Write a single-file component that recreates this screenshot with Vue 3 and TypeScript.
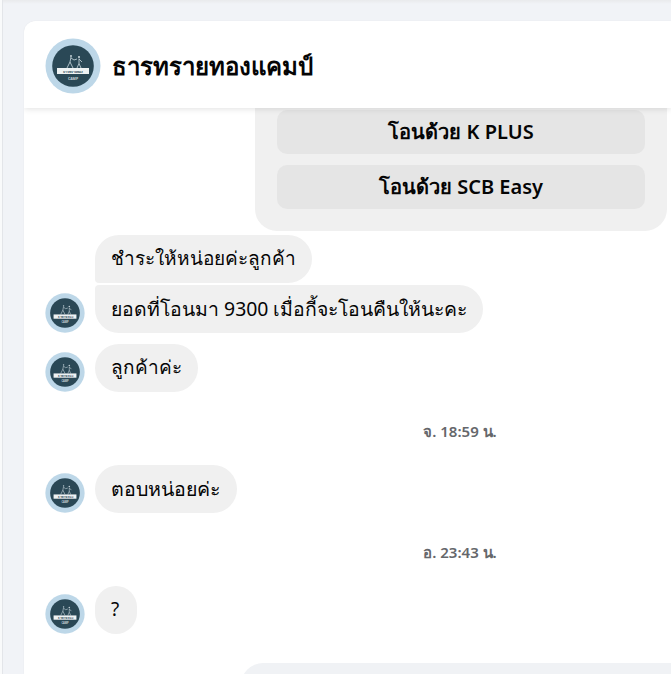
<template>
  <div class="page">
    <div class="card">
      <header class="head">
        <svg class="logo logo-big" viewBox="0 0 56 56">
          <g id="camp-logo">
            <circle cx="28" cy="28" r="27.5" fill="#bdd7e8" />
            <circle cx="28" cy="28" r="20.8" fill="#2a4856" />
            <!-- two small figures above the band -->
            <circle cx="26" cy="18" r="1" fill="#c3d0d6" />
            <circle cx="34" cy="19" r="1.100" fill="#c3d0d6" />
            <path d="M26 19l-1 5-3 6M25 24l3 6M26 20l3 2 3-1M34 20.500v5l-2 4.500M34 25.500l2 4.500M34 21l3 3" fill="none" stroke="#b9c9d0" stroke-width="0.9" />
            <rect x="12" y="30" width="32" height="6" fill="#eef2f3" />
            <text x="28" y="34.800" class="logo-band" text-anchor="middle">ธารทรายทอง</text>
            <text x="28" y="42" class="logo-camp" text-anchor="middle">CAMP</text>
          </g>
        </svg>
        <h1 class="title">ธารทรายทองแคมป์</h1>
      </header>
      <div class="scroll">
        <div class="feed">
          <div class="out-group">
            <div class="out-bubble">
              <button class="pay-btn">โอนด้วย K PLUS</button>
              <button class="pay-btn">โอนด้วย SCB Easy</button>
            </div>
          </div>

          <div class="row first">
            <span class="avatar-gap"></span>
            <div class="bubble top">ชำระให้หน่อยค่ะลูกค้า</div>
          </div>
          <div class="row tight">
            <svg class="logo" viewBox="0 0 56 56"><use href="#camp-logo" /></svg>
            <div class="bubble bottom">ยอดที่โอนมา 9300 เมื่อกี้จะโอนคืนให้นะคะ</div>
          </div>
          <div class="row gap-s">
            <svg class="logo" viewBox="0 0 56 56"><use href="#camp-logo" /></svg>
            <div class="bubble">ลูกค้าค่ะ</div>
          </div>

          <div class="stamp">จ. 18:59 น.</div>

          <div class="row">
            <svg class="logo" viewBox="0 0 56 56"><use href="#camp-logo" /></svg>
            <div class="bubble strong">ตอบหน่อยค่ะ</div>
          </div>

          <div class="stamp">อ. 23:43 น.</div>

          <div class="row">
            <svg class="logo" viewBox="0 0 56 56"><use href="#camp-logo" /></svg>
            <div class="bubble short">?</div>
          </div>

          <div class="next-out"></div>
        </div>
      </div>
    </div>
  </div>
</template>

<script setup lang="ts">
</script>

<style>
html, body {
  margin: 0;
  height: 100%;
  overflow: hidden;
}
</style>

<style scoped>
.page {
  height: 674px;
  box-sizing: border-box;
  padding: 21px 0 0 24px;
  background: linear-gradient(#e9eaec, #f1f3f7 4px);
  box-shadow: inset 2px 0 0 #f9fafb, inset 3px 0 0 #e3e5e9;
  overflow: hidden;
  font-family: "Noto Sans", "Open Sans", sans-serif;
}

.logo-band {
  font-size: 3.600px;
  font-weight: 700;
  fill: #2a4856;
}

.logo-camp {
  font-size: 3.500px;
  font-weight: 700;
  fill: #c9d6dc;
}

.card {
  height: 653px;
  background: #fff;
  border-radius: 12px 0 0 0;
  box-shadow: 0 0 2px rgba(0, 0, 0, 0.06);
  overflow: hidden;
  display: flex;
  flex-direction: column;
}

.head {
  flex: none;
  height: 87px;
  box-sizing: border-box;
  padding: 17px 22px 0 21px;
  display: flex;
  align-items: flex-start;
  gap: 11px;
  background: #fff;
  box-shadow: 0 1px 6px rgba(0, 0, 0, 0.12);
  position: relative;
  z-index: 1;
}

.title {
  margin: 0;
  font-size: 24px;
  font-weight: 700;
  line-height: 56px;
  color: #050505;
}

.logo {
  flex: none;
  width: 40px;
  height: 40px;
}

.logo-big {
  width: 56px;
  height: 56px;
}

.scroll {
  flex: 1;
  overflow: hidden;
}

.feed {
  margin-top: -14px;
  padding-left: 21px;
}

.out-group {
  display: flex;
  justify-content: flex-end;
  padding-right: 4px;
}

.out-bubble {
  width: 368px;
  padding: 16px 22px 22px;
  background: #f0f0f0;
  border-radius: 0 0 22px 22px;
  display: flex;
  flex-direction: column;
  gap: 11px;
}

.pay-btn {
  height: 44px;
  padding: 0;
  border: 0;
  border-radius: 10px;
  background: #e5e5e5;
  color: #050505;
  font-family: inherit;
  font-size: 20px;
  font-weight: 600;
}

.row {
  display: flex;
  align-items: flex-end;
  gap: 10px;
}

.first {
  margin-top: 4px;
}

.tight {
  margin-top: 2px;
}

.gap-s {
  margin-top: 11px;
}

.avatar-gap {
  flex: none;
  width: 40px;
}

.bubble {
  min-height: 48px;
  box-sizing: border-box;
  padding: 0 16px;
  border-radius: 24px;
  background: #f0f0f0;
  color: #050505;
  font-size: 19px;
  line-height: 47px;
  white-space: nowrap;
}

.bubble.top {
  border-bottom-left-radius: 4px;
}

.bubble.bottom {
  border-top-left-radius: 4px;
  font-size: 19.400px;
}

.bubble.strong {
  font-size: 19.600px;
  font-weight: 500;
}

.bubble.short {
  min-width: 42px;
}

/* the thread is wider than the window, so the stamps sit right of centre */
.stamp {
  width: 830px;
  margin: 27px 0 22px;
  text-align: center;
  font-size: 15px;
  font-weight: 600;
  line-height: 24px;
  color: #65676b;
}

.next-out {
  width: 430px;
  height: 60px;
  margin: 29px 0 0 auto;
  background: #f0f2f5;
  border-radius: 22px 0 0 0;
}
</style>
